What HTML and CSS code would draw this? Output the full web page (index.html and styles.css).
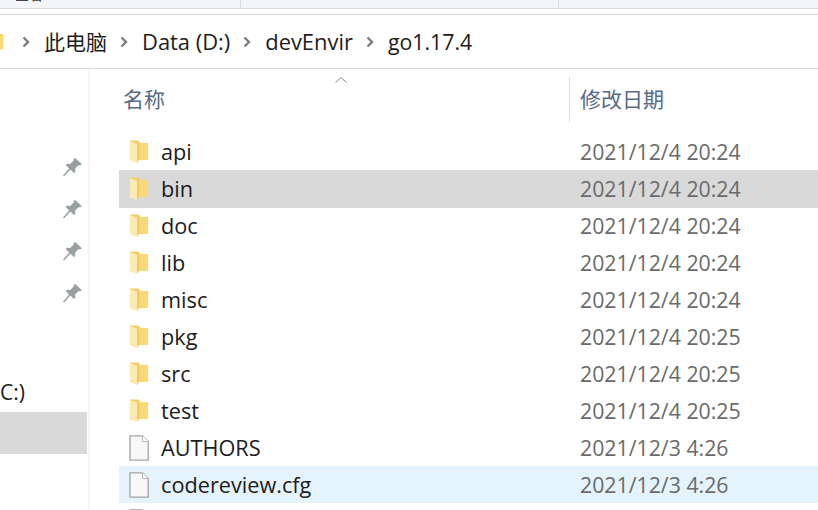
FILE: index.html
```html
<!DOCTYPE html>
<html lang="zh">
<head>
<meta charset="utf-8">
<title>go1.17.4</title>
<link rel="stylesheet" href="styles.css">
</head>
<body>
<svg width="0" height="0" class="defs">
  <defs>
    <symbol id="folder" viewBox="0 0 20 26">
      <path d="M1 1.500h8.500l2 2.500H19v17H1z" fill="#f3cd6b"/>
      <path d="M9 4l10 .500V21H9z" fill="#f9d977"/>
      <path d="M1 2l7.500 3v19L1 21.500z" fill="#fdeab0"/>
      <path d="M8.500 5v19l1.500-3V5z" fill="#e9c265"/>
    </symbol>
    <symbol id="file" viewBox="0 0 20 26">
      <path d="M1 .8h12.500l5.700 5.700v18.700H1z" fill="#f8f8f8" stroke="#a4a4a4" stroke-width="1.300"/>
      <path d="M13.500 .8v5.700h5.700" fill="#fff" stroke="#b8b8b8" stroke-width="1"/>
    </symbol>
    <symbol id="pin" viewBox="0 0 20 20">
      <path d="M12.500 1l6.500 6-2 1-1-.5-3.500 3.500.2 3-1.400 1.300-3.300-3.300L2 18.500l-1-1 5.800-6.500-3.300-3.300 1.300-1.300 3 .2L11.300 3l-.3-1z" fill="#98a0a3"/>
    </symbol>
    <symbol id="chev" viewBox="0 0 8 12">
      <path d="M1.500 1.500L6 6l-4.500 4.500" fill="none" stroke="#7d7d7d" stroke-width="2.400"/>
    </symbol>
  </defs>
</svg>
<div class="window">
  <div class="ribbon">
    <span class="ribbon-text">查看</span>
    <span class="ribbon-sep"></span>
    <span class="ribbon-sep ribbon-sep-far"></span>
  </div>
  <div class="ribbon-gap"></div>
  <nav class="address">
    <svg class="addr-folder"><use href="#folder"/></svg>
    <svg class="chev"><use href="#chev"/></svg>
    <span class="crumb crumb-cjk">此电脑</span>
    <svg class="chev"><use href="#chev"/></svg>
    <span class="crumb">Data (D:)</span>
    <svg class="chev"><use href="#chev"/></svg>
    <span class="crumb">devEnvir</span>
    <svg class="chev"><use href="#chev"/></svg>
    <span class="crumb crumb-last">go1.17.4</span>
  </nav>
  <div class="main">
    <aside class="sidebar">
      <div class="pins">
        <svg class="pin"><use href="#pin"/></svg>
        <svg class="pin"><use href="#pin"/></svg>
        <svg class="pin"><use href="#pin"/></svg>
        <svg class="pin"><use href="#pin"/></svg>
      </div>
      <div class="drive">C:)</div>
      <div class="nav-selected"></div>
    </aside>
    <section class="list">
      <div class="head">
        <div class="head-name">名称<svg class="sort" viewBox="0 0 12 6"><path d="M.5 5.500L6 .5l5.500 5" fill="none" stroke="#8a8a8a"/></svg></div>
        <div class="head-date">修改日期</div>
      </div>
      <div class="rows">
        <div class="row"><svg class="ico"><use href="#folder"/></svg><span class="name">api</span><span class="date">2021/12/4 20:24</span></div>
        <div class="row row-active"><svg class="ico"><use href="#folder"/></svg><span class="name">bin</span><span class="date">2021/12/4 20:24</span></div>
        <div class="row"><svg class="ico"><use href="#folder"/></svg><span class="name">doc</span><span class="date">2021/12/4 20:24</span></div>
        <div class="row"><svg class="ico"><use href="#folder"/></svg><span class="name">lib</span><span class="date">2021/12/4 20:24</span></div>
        <div class="row"><svg class="ico"><use href="#folder"/></svg><span class="name">misc</span><span class="date">2021/12/4 20:24</span></div>
        <div class="row"><svg class="ico"><use href="#folder"/></svg><span class="name">pkg</span><span class="date">2021/12/4 20:25</span></div>
        <div class="row"><svg class="ico"><use href="#folder"/></svg><span class="name">src</span><span class="date">2021/12/4 20:25</span></div>
        <div class="row"><svg class="ico"><use href="#folder"/></svg><span class="name">test</span><span class="date">2021/12/4 20:25</span></div>
        <div class="row"><svg class="ico"><use href="#file"/></svg><span class="name">AUTHORS</span><span class="date">2021/12/3 4:26</span></div>
        <div class="row row-hover"><svg class="ico"><use href="#file"/></svg><span class="name">codereview.cfg</span><span class="date">2021/12/3 4:26</span></div>
        <div class="row"><svg class="ico"><use href="#file"/></svg></div>
      </div>
    </section>
  </div>
</div>
</body>
</html>
```
FILE: styles.css
```css
* { box-sizing: border-box; }
html, body { margin: 0; padding: 0; }
body {
  width: 818px;
  height: 510px;
  overflow: hidden;
  background: #fff;
  font-family: "Open Sans", "Noto Sans CJK SC", sans-serif;
  color: #1a1a1a;
}
.defs { display: block; height: 0; }
.window { display: flex; flex-direction: column; height: 510px; overflow: hidden; }
.ribbon {
  height: 9px;
  flex: none;
  background: #f4f5f6;
  border-bottom: 1px solid #d9d9d9;
  display: flex;
  overflow: hidden;
}
.ribbon-text {
  font-size: 14px;
  line-height: 14px;
  margin: -12px 0 0 15px;
  color: #444;
  width: 225px;
}
.ribbon-sep { width: 1px; height: 8px; background: #dcdcdc; }
.ribbon-sep-far { margin-left: 317px; }
.ribbon-gap { height: 6px; flex: none; border-bottom: 1px solid #dadada; }
.address {
  height: 54px;
  flex: none;
  border-bottom: 1px solid #d9d9d9;
  display: flex;
  align-items: center;
  overflow: hidden;
  font-size: 21.9px;
  color: #1c1c1c;
}
.addr-folder { width: 18px; height: 24px; margin: 0 5px 0 -14px; flex: none; }
.chev { width: 8px; height: 12px; flex: none; margin: 0 14px 0 13px; }
.crumb { white-space: nowrap; line-height: 54px; }
.crumb-cjk { font-size: 21px; }
.crumb-last { font-size: 21.3px; }
.main { flex: 1; display: flex; min-height: 0; }
.sidebar {
  width: 90px;
  flex: none;
  border-right: 2px solid #f5f5f5;
  display: flex;
  flex-direction: column;
}
.pins {
  display: flex;
  flex-direction: column;
  align-items: flex-end;
  gap: 21px;
  padding: 88px 5px 0 0;
}
.pin { width: 21px; height: 21px; }
.drive { font-size: 21px; line-height: 28px; margin-top: 74px; color: #1c1c1c; }
.nav-selected { width: 87px; height: 42px; margin-top: 6px; background: #d9d9d9; }
.list { flex: 1; min-width: 0; padding-left: 29px; }
.head { height: 53px; display: flex; font-size: 21px; color: #566a85; }
.head-name {
  width: 450px;
  padding-left: 4px;
  padding-top: 8px;
  position: relative;
  line-height: 44px;
}
.sort { position: absolute; left: 216px; top: 8px; width: 12px; height: 6px; }
.head-date {
  flex: 1;
  margin-top: 8px;
  height: 45px;
  border-left: 1px solid #dedede;
  padding-left: 10px;
  line-height: 44px;
}
.rows { display: flex; flex-direction: column; padding-top: 11px; }
.row {
  height: 37px;
  flex: none;
  display: flex;
  align-items: center;
  font-size: 21.7px;
  color: #1c1c1c;
}
.row-active { background: #d9d9d9; height: 38px; padding-bottom: 1px; margin-bottom: -1px; }
.row-hover { background: #e5f3fd; }
.ico { width: 20px; height: 26px; margin-left: 10px; flex: none; }
.name { width: 419px; margin-left: 12px; white-space: nowrap; }
.date { color: #6a6a6a; white-space: nowrap; font-size: 21.3px; }
```
